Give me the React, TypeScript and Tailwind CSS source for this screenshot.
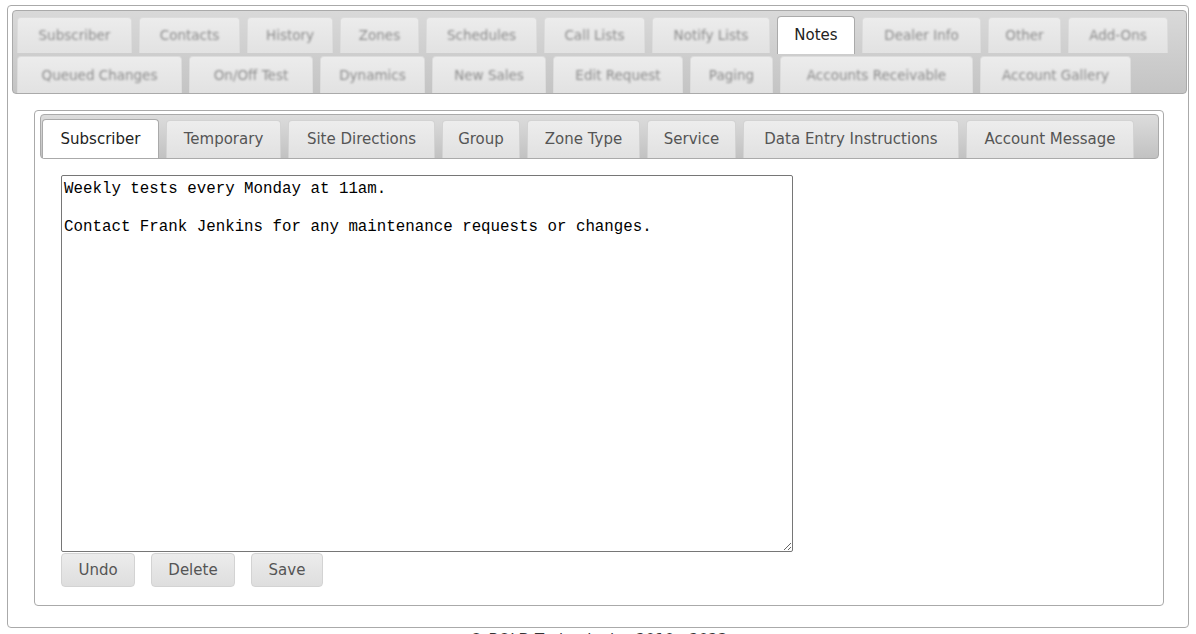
const topRow1: [string, string][] = [
  ["Subscriber", "w-[115px]"],
  ["Contacts", "w-[101px]"],
  ["History", "w-[86px]"],
  ["Zones", "w-[79px]"],
  ["Schedules", "w-[111px]"],
  ["Call Lists", "w-[101px]"],
  ["Notify Lists", "w-[118px]"],
  ["Notes", "w-[78px]"],
  ["Dealer Info", "w-[119px]"],
  ["Other", "w-[73px]"],
  ["Add-Ons", "w-[100px]"],
];

const topRow2: [string, string][] = [
  ["Queued Changes", "w-[165px]"],
  ["On/Off Test", "w-[124px]"],
  ["Dynamics", "w-[105px]"],
  ["New Sales", "w-[114px]"],
  ["Edit Request", "w-[130px]"],
  ["Paging", "w-[83px]"],
  ["Accounts Receivable", "w-[193px]"],
  ["Account Gallery", "w-[151px]"],
];

const noteTabs: [string, string][] = [
  ["Subscriber", "w-[117px]"],
  ["Temporary", "w-[115px]"],
  ["Site Directions", "w-[147px]"],
  ["Group", "w-[78px]"],
  ["Zone Type", "w-[113px]"],
  ["Service", "w-[89px]"],
  ["Data Entry Instructions", "w-[216px]"],
  ["Account Message", "w-[168px]"],
];

function TopTab({ label, width, active, tall }: { label: string; width: string; active?: boolean; tall?: boolean }) {
  if (active) {
    return (
      <div
        className={`${width} h-[38px] -mt-[1px] flex items-center justify-center bg-white border border-[#aaa] border-b-0 rounded-t-[4px] text-[15px] text-[#222]`}
      >
        {label}
      </div>
    );
  }
  return (
    <div
      className={`${width} ${tall ? "h-[37px]" : "h-[36px]"} flex items-center justify-center bg-gradient-to-b from-[#ececec] to-[#e2e2e2] rounded-t-[4px] border border-[#dcdcdc] border-b-0`}
    >
      <span className="text-[13.5px] text-[#8c8c8c] blur-[0.9px]">{label}</span>
    </div>
  );
}

export default function App() {
  return (
    <div className="min-h-screen bg-white pt-[5px] px-[7px] font-['DejaVu_Sans',Verdana,sans-serif] text-[#333]">
      {/* Outer panel */}
      <div className="border border-[#aaa] rounded-[4px] pl-[4px] pr-[1px] pt-[4px] pb-[21px]">
        {/* Main tab strip */}
        <div className="h-[84px] border border-[#aaa] rounded-[4px] bg-gradient-to-b from-[#d9d9d9] to-[#c4c4c4] pl-[4px] pt-[6px] flex flex-col gap-[2px]">
          <div className="flex gap-[7px]">
            {topRow1.map(([label, w]) => (
              <TopTab key={label} label={label} width={w} active={label === "Notes"} />
            ))}
          </div>
          <div className="flex gap-[7px]">
            {topRow2.map(([label, w]) => (
              <TopTab key={label} label={label} width={w} tall />
            ))}
          </div>
        </div>

        {/* Notes section */}
        <div className="ml-[22px] mr-[22px] mt-[16px] border border-[#aaa] rounded-[4px] pt-[3px] pl-[5px] pr-[4px] pb-[18px] w-[1130px]">
          <div className="h-[45px] border border-[#aaa] rounded-[4px] bg-gradient-to-b from-[#dcdcdc] to-[#c2c2c2] pl-[1px] pt-[5px] flex items-end gap-[7px]">
            {noteTabs.map(([label, w], i) => (
              <div
                key={label}
                className={
                  i === 0
                    ? `${w} h-[39px] flex items-center justify-center bg-white border border-[#aaa] border-b-0 rounded-t-[4px] text-[15px] text-[#222]`
                    : `${w} h-[38px] flex items-center justify-center bg-gradient-to-b from-[#ededed] to-[#e1e1e1] border border-[#d3d3d3] border-b-0 rounded-t-[4px] text-[15px] text-[#555]`
                }
              >
                {label}
              </div>
            ))}
          </div>

          <div className="pl-[21px] pt-[16px]">
            <textarea
              readOnly
              defaultValue={"Weekly tests every Monday at 11am.\n\nContact Frank Jenkins for any maintenance requests or changes."}
              className="block w-[732px] h-[377px] border border-[#767676] rounded-[2px] px-[2px] pt-[4px] pb-[1px] font-['Liberation_Mono',Courier,monospace] text-[15.8px] leading-[19px] text-black outline-none"
            />
            <div className="flex gap-[16px] mt-[1px]">
              {["Undo", "Delete", "Save"].map((b) => (
                <button
                  key={b}
                  className={`${b === "Undo" ? "w-[74px]" : b === "Delete" ? "w-[84px]" : "w-[72px]"} h-[34px] rounded-[4px] border border-[#d3d3d3] bg-gradient-to-b from-[#ececec] to-[#dedede] text-[15px] text-[#555]`}
                >
                  {b}
                </button>
              ))}
            </div>
          </div>
        </div>
      </div>

      <div className="text-center text-[15px] text-[#333] mt-[1px]">© BOLD Technologies 2010 - 2023</div>
    </div>
  );
}
